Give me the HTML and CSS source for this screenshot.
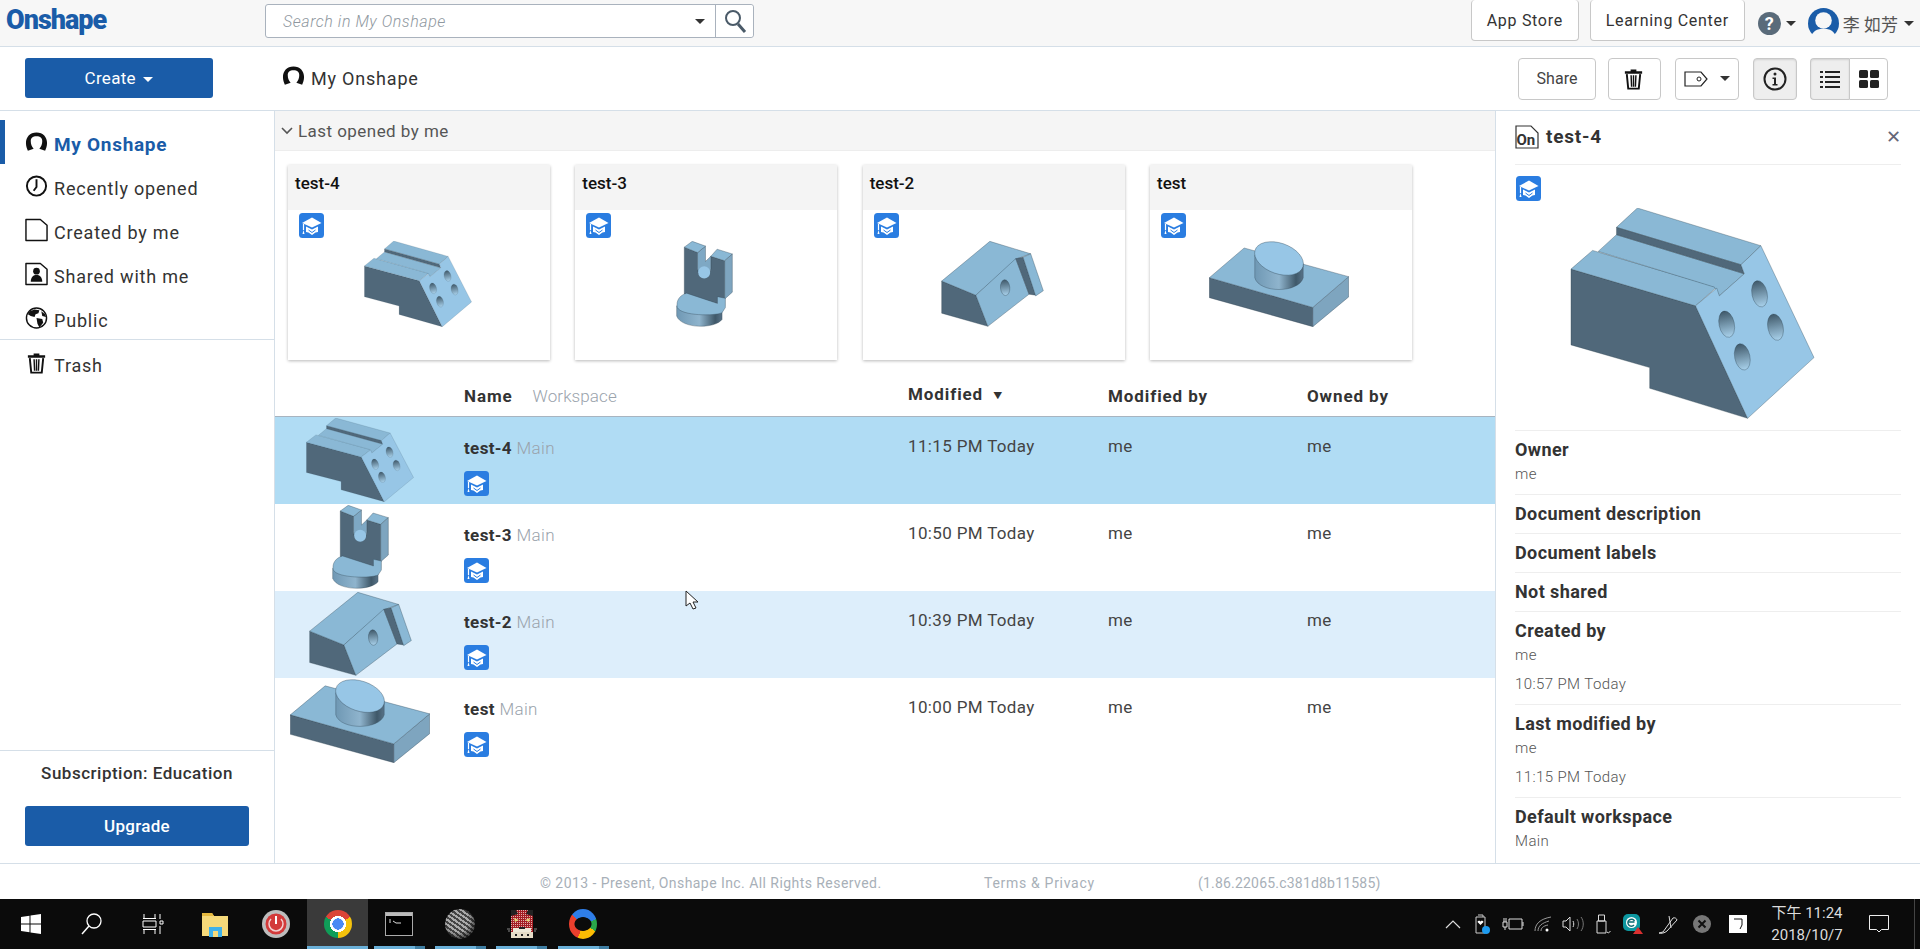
FILE: index.html
```html
<!DOCTYPE html>
<html lang="en">

<head>
    <meta charset="UTF-8">
    <title>My Onshape</title>
    <link rel="stylesheet" href="styles.css">
</head>

<body>
    <svg class="sprites" width="0" height="0" aria-hidden="true">
        <defs>
            <linearGradient id="hole" x1="0" y1="0" x2="0" y2="1">
                <stop offset="0" stop-color="#3f5869"/>
                <stop offset="1" stop-color="#a9d2ec"/>
            </linearGradient>
            <linearGradient id="cyl" x1="0" y1="0" x2="1" y2="0">
                <stop offset="0" stop-color="#6f98b4"/>
                <stop offset="0.5" stop-color="#8fb4cd"/>
                <stop offset="0.85" stop-color="#3f5869"/>
                <stop offset="1" stop-color="#587388"/>
            </linearGradient>
            <pattern id="check" width="2" height="2" patternUnits="userSpaceOnUse">
                <rect width="2" height="2" fill="#a41f24"/>
                <rect width="1" height="1" fill="#e0b0b0"/>
            </pattern>

            <symbol id="i-person" viewBox="0 0 24 24">
                <path d="M12 2C5 2 1 7 1 13c0 3 1 6 2 8l6-2c-2-2-3-5-3-8 0-3 2-5 6-5s6 2 6 5c0 3-1 6-3 8l6 2c1-2 2-5 2-8 0-6-4-11-11-11z" fill="currentColor"/>
            </symbol>
            <symbol id="i-clock" viewBox="0 0 24 24">
                <circle cx="12" cy="12" r="10" fill="none" stroke="currentColor" stroke-width="2"/>
                <path d="M12 5v8l-3 4" fill="none" stroke="currentColor" stroke-width="2"/>
            </symbol>
            <symbol id="i-doc" viewBox="0 0 24 24">
                <path d="M1 1h15l7 6v16H1z" fill="none" stroke="currentColor" stroke-width="1.5" stroke-linejoin="round"/>
            </symbol>
            <symbol id="i-shared" viewBox="0 0 24 24">
                <path d="M1 1h15l7 6v16H1z" fill="none" stroke="currentColor" stroke-width="1.5" stroke-linejoin="round"/>
                <circle cx="12" cy="9" r="3.5" fill="currentColor"/>
                <path d="M6 20c0-5 3-7 6-7s6 2 6 7z" fill="currentColor"/>
            </symbol>
            <symbol id="i-globe" viewBox="0 0 24 24">
                <circle cx="12" cy="12" r="10.5" fill="none" stroke="currentColor" stroke-width="1.5"/>
                <path d="M5 5l5-2 5 1-1 3-3 1-1 3-4-1-3-2zM12 12l6 1 1 4-4 5-2-4zM17 5l4 3 1 3-4-1z" fill="currentColor"/>
            </symbol>
            <symbol id="i-trash" viewBox="0 0 24 24">
                <path d="M3 4h18v2.500H3zM9 2h6v2H9z" fill="currentColor"/>
                <path d="M5 7l1.500 15h11L19 7" fill="none" stroke="currentColor" stroke-width="2"/>
                <path d="M9.500 8l.5 12M12 8v12M14.500 8l-.5 12" stroke="currentColor" stroke-width="1.500"/>
            </symbol>
            <symbol id="i-badge" viewBox="0 0 25 25">
                <rect width="25" height="25" rx="3.500" fill="#2a7de1"/>
                <path d="M3 10L13 4.500l9.500 5.500-9.500 4.500z" fill="#fff"/>
                <path d="M7 13.500l6 3 6-3v5.500l-2.500.5-3.500 2.500-3.500-2.500-2.500-.5z" fill="#fff"/>
                <path d="M9.500 17l3.500 2.500 3.500-2.500" fill="none" stroke="#2a7de1"/>
                <path d="M4.500 11v6" stroke="#fff" stroke-width="1.200"/>
                <path d="M3.500 21l1-4 1 4z" fill="#fff"/>
            </symbol>

            <!-- parts, traced in 3x reference coordinates -->
            <g id="part-bracket" stroke="#2e4250" stroke-width="1">
                <path d="M393 808L768 918 925 1255 630 1165V1103L393 1035z" fill="#50687a"/>
                <path d="M393 808L458 752 832 862 768 918z" fill="#8ab8d5"/>
                <path d="M475 755L530 705 915 822 840 888 825 862z" fill="#8ab8d5"/>
                <path d="M530 683L593 625 965 738 905 795z" fill="#8ab8d5"/>
                <path d="M530 683L905 795 915 822 530 705z" fill="#50687a"/>
                <path d="M768 918L832 865 840 888 915 822 905 795 965 738 1125 1073 925 1255z" fill="#97c6e6"/>
                <ellipse cx="961" cy="882" rx="23" ry="40" transform="rotate(-12 961 882)" fill="url(#hole)"/>
                <ellipse cx="862" cy="973" rx="23" ry="40" transform="rotate(-12 862 973)" fill="url(#hole)"/>
                <ellipse cx="1009" cy="982" rx="23" ry="40" transform="rotate(-12 1009 982)" fill="url(#hole)"/>
                <ellipse cx="909" cy="1071" rx="23" ry="40" transform="rotate(-12 909 1071)" fill="url(#hole)"/>
            </g>
            <g id="part-fork" stroke="#2e4250" stroke-width="1">
                <path d="M208 428L248 444V490C252 525 285 525 288 490V455L330 468V600L208 565z" fill="#50687a"/>
                <path d="M248 444L272 425V470L288 455V490C285 525 252 525 248 490z" fill="#7ea8c4"/>
                <circle cx="268" cy="502" r="18" fill="#97c6e6" stroke="none"/>
                <path d="M208 428L232 411 272 425 248 444z" fill="#8ab8d5"/>
                <path d="M288 455L307 434 353 448 330 468z" fill="#8ab8d5"/>
                <path d="M330 468L353 448V560L330 580z" fill="#7ea5bf"/>
                <path d="M185 600V630C200 668 300 668 322 640V610z" fill="url(#cyl)"/>
                <path d="M215 563L308 593V573L332 578V605L322 620C300 630 200 630 187 605 182 585 195 568 215 563z" fill="#8ab8d5"/>
            </g>
            <g id="part-block" stroke="#2e4250" stroke-width="1">
                <path d="M117 787L220 828 256 918 117 880z" fill="#50687a"/>
                <path d="M117 787L262 672 385 708 345 722 220 828z" fill="#8ab8d5"/>
                <path d="M220 828L340 722 380 825 256 918z" fill="#8ab8d5"/>
                <path d="M340 722L362 718 400 828 380 825z" fill="#50687a"/>
                <path d="M362 718L385 708 423 815 400 830z" fill="#8ab8d5"/>
                <ellipse cx="308" cy="806" rx="14" ry="23" transform="rotate(-5 308 806)" fill="url(#hole)"/>
            </g>
            <g id="part-plate" stroke="#2e4250" stroke-width="1">
                <path d="M60 1040L372 1125V1180L60 1097z" fill="#50687a"/>
                <path d="M372 1125L480 1037V1095L372 1180z" fill="#7ea5bf"/>
                <path d="M60 1040L165 955 480 1037 372 1125z" fill="#8ab8d5"/>
                <path d="M197 975V1040C210 1085 330 1085 343 1040V1000z" fill="url(#cyl)"/>
                <ellipse cx="270" cy="985" rx="76" ry="44" transform="rotate(18 270 985)" fill="#97c6e6"/>
            </g>
        </defs>
    </svg>

    <header class="topbar">
        <a class="logo">Onshape</a>
        <div class="search">
            <span class="search-text">Search in My Onshape</span>
            <span class="caret search-caret"></span>
            <button class="search-btn">
                <svg viewBox="0 0 24 24" width="24" height="24"><circle cx="10" cy="9" r="7" fill="none" stroke="#4a5a68" stroke-width="2"/><path d="M15 15l7 8" stroke="#4a5a68" stroke-width="3"/></svg>
            </button>
        </div>
        <div class="top-right">
            <a class="btn top-btn app-btn">App Store</a>
            <a class="btn top-btn">Learning Center</a>
            <span class="help">?</span>
            <span class="caret"></span>
            <svg class="avatar" viewBox="0 0 30 30"><circle cx="15" cy="15" r="15" fill="#1a5ca8"/><circle cx="15" cy="12" r="8" fill="#f7f7f7"/><path d="M2 30c2-8 7-10 13-10s11 2 13 10z" fill="#f7f7f7"/></svg>
            <span class="user">李 如芳</span>
            <span class="caret"></span>
        </div>
    </header>

    <div class="toolbar">
        <button class="create">Create <span class="caret caret-white"></span></button>
        <div class="crumb">
            <svg class="ic ic-crumb"><use href="#i-person"/></svg>
            <span>My Onshape</span>
        </div>
        <div class="tools">
            <button class="btn tool share">Share</button>
            <button class="btn tool trash"><svg class="ic"><use href="#i-trash"/></svg></button>
            <button class="btn tool tag">
                <svg viewBox="0 0 24 16" width="24" height="16"><path d="M1 1h16l6 7-6 7H1z" fill="none" stroke="#222" stroke-width="1.200"/><circle cx="15" cy="8" r="2" fill="none" stroke="#222"/></svg>
                <span class="caret"></span>
            </button>
            <button class="btn tool info on">
                <svg viewBox="0 0 24 24" width="24" height="24"><circle cx="12" cy="12" r="10.500" fill="none" stroke="#222" stroke-width="2"/><circle cx="12" cy="7" r="1.500" fill="#222"/><path d="M9.500 10.500H13V17h1.500v1.500h-5V17H11v-5H9.500z" fill="#222"/></svg>
            </button>
            <div class="toggle">
                <button class="btn tool view on">
                    <svg viewBox="0 0 20 18" width="20" height="18"><path d="M0 2h3M5 2h15M0 7h3M5 7h15M0 12h3M5 12h15M0 17h3M5 17h15" stroke="#222" stroke-width="2"/></svg>
                </button>
                <button class="btn tool view">
                    <svg viewBox="0 0 20 18" width="20" height="18"><rect width="9" height="8" rx="1.500" fill="#222"/><rect x="11" width="9" height="8" rx="1.500" fill="#222"/><rect y="10" width="9" height="8" rx="1.500" fill="#222"/><rect x="11" y="10" width="9" height="8" rx="1.500" fill="#222"/></svg>
                </button>
            </div>
        </div>
    </div>

    <div class="app">
        <nav class="sidebar">
            <a class="nav-item selected-nav"><svg class="ic"><use href="#i-person"/></svg>My Onshape</a>
            <a class="nav-item"><svg class="ic"><use href="#i-clock"/></svg>Recently opened</a>
            <a class="nav-item"><svg class="ic"><use href="#i-doc"/></svg>Created by me</a>
            <a class="nav-item"><svg class="ic"><use href="#i-shared"/></svg>Shared with me</a>
            <a class="nav-item"><svg class="ic"><use href="#i-globe"/></svg>Public</a>
            <a class="nav-item nav-trash"><svg class="ic"><use href="#i-trash"/></svg>Trash</a>
            <div class="sub">
                <p>Subscription: Education</p>
                <button class="upgrade">Upgrade</button>
            </div>
        </nav>

        <main class="content">
            <div class="recent-head">
                <svg viewBox="0 0 12 8" width="12" height="8"><path d="M1 1l5 5 5-5" fill="none" stroke="#555" stroke-width="1.600"/></svg>
                <span>Last opened by me</span>
            </div>
            <div class="cards">
                <article class="card">
                    <h3>test-4</h3>
                    <svg class="badge"><use href="#i-badge"/></svg>
                    <svg class="part part-a" viewBox="390 625 738 632" preserveAspectRatio="none"><use href="#part-bracket"/></svg>
                </article>
                <article class="card">
                    <h3>test-3</h3>
                    <svg class="badge"><use href="#i-badge"/></svg>
                    <svg class="part part-b" viewBox="183 410 172 252" preserveAspectRatio="none"><use href="#part-fork"/></svg>
                </article>
                <article class="card">
                    <h3>test-2</h3>
                    <svg class="badge"><use href="#i-badge"/></svg>
                    <svg class="part part-c" viewBox="115 671 310 249" preserveAspectRatio="none"><use href="#part-block"/></svg>
                </article>
                <article class="card">
                    <h3>test</h3>
                    <svg class="badge"><use href="#i-badge"/></svg>
                    <svg class="part part-d" viewBox="59 935 422 246" preserveAspectRatio="none"><use href="#part-plate"/></svg>
                </article>
            </div>

            <div class="list-head grid">
                <span></span>
                <span class="name-head"><b>Name</b><em>Workspace</em></span>
                <b>Modified <i class="sort">▼</i></b>
                <b>Modified by</b>
                <b>Owned by</b>
            </div>
            <div class="row grid selected">
                <svg class="part part-a" viewBox="390 625 738 632" preserveAspectRatio="none"><use href="#part-bracket"/></svg>
                <div class="doc"><p><b>test-4</b> <em>Main</em></p><svg class="badge-row"><use href="#i-badge"/></svg></div>
                <span>11:15 PM Today</span><span>me</span><span>me</span>
            </div>
            <div class="row grid">
                <svg class="part part-b" viewBox="183 410 172 252" preserveAspectRatio="none"><use href="#part-fork"/></svg>
                <div class="doc"><p><b>test-3</b> <em>Main</em></p><svg class="badge-row"><use href="#i-badge"/></svg></div>
                <span>10:50 PM Today</span><span>me</span><span>me</span>
            </div>
            <div class="row grid hovered">
                <svg class="part part-c" viewBox="115 671 310 249" preserveAspectRatio="none"><use href="#part-block"/></svg>
                <div class="doc"><p><b>test-2</b> <em>Main</em></p><svg class="badge-row"><use href="#i-badge"/></svg></div>
                <span>10:39 PM Today</span><span>me</span><span>me</span>
                <svg class="cursor" viewBox="0 0 13 20" width="13" height="20"><path d="M1 1v15l4-3 3 6 3-1-3-6h5z" fill="#fff" stroke="#222"/></svg>
            </div>
            <div class="row grid">
                <svg class="part part-d" viewBox="59 935 422 246" preserveAspectRatio="none"><use href="#part-plate"/></svg>
                <div class="doc"><p><b>test</b> <em>Main</em></p><svg class="badge-row"><use href="#i-badge"/></svg></div>
                <span>10:00 PM Today</span><span>me</span><span>me</span>
            </div>
        </main>

        <aside class="panel">
            <div class="panel-head">
                <svg class="doc-on" viewBox="0 0 24 24" width="24" height="24"><path d="M1 1h15l7 7v15H1z" fill="none" stroke="#333" stroke-width="1.200"/><text x="1.500" y="20" class="doc-on-text">On</text></svg>
                <h2>test-4</h2>
                <span class="close">✕</span>
            </div>
            <svg class="badge panel-badge"><use href="#i-badge"/></svg>
            <svg class="part-big" viewBox="390 625 738 632" preserveAspectRatio="none"><use href="#part-bracket"/></svg>
            <div class="prop has-value"><h4>Owner</h4><p>me</p></div>
            <div class="prop"><h4>Document description</h4></div>
            <div class="prop"><h4>Document labels</h4></div>
            <div class="prop"><h4>Not shared</h4></div>
            <div class="prop has-value"><h4>Created by</h4><p>me</p><p class="when">10:57 PM Today</p></div>
            <div class="prop has-value"><h4>Last modified by</h4><p>me</p><p class="when">11:15 PM Today</p></div>
            <div class="prop has-value"><h4>Default workspace</h4><p>Main</p></div>
        </aside>
    </div>

    <footer class="footer">
        <span>© 2013 - Present, Onshape Inc. All Rights Reserved.</span>
        <span class="terms">Terms &amp; Privacy</span>
        <span class="version">(1.86.22065.c381d8b11585)</span>
    </footer>

    <div class="taskbar">
        <span class="tile">
            <svg viewBox="0 0 20 20" width="20" height="20"><path d="M0 3l8.500-1.300V9.500H0zM9.500 1.500L20 0v9.500H9.500zM0 10.500h8.500v7.800L0 17zM9.500 10.500H20V20L9.500 18.500z" fill="#fff"/></svg>
        </span>
        <span class="tile">
            <svg viewBox="0 0 22 22" width="22" height="22"><circle cx="13" cy="8" r="7" fill="none" stroke="#fff" stroke-width="1.300"/><path d="M8 13l-7 8" stroke="#fff" stroke-width="1.500"/></svg>
        </span>
        <span class="tile">
            <svg viewBox="0 0 22 20" width="22" height="20"><path d="M1 4.500h13M1 15.500h13M1 7h13v6H1zM2 0v4M13 0v4M2 16v4M13 16v4" fill="none" stroke="#fff"/><path d="M18 0v5M18 7h3v3h-3zM18 12v8" stroke="#fff" fill="none"/></svg>
        </span>
        <span class="tile">
            <svg viewBox="0 0 28 28" width="28" height="28"><path d="M1 3h10l2 3h14v20H1z" fill="#f5d97a"/><path d="M1 3h10l2 3H1z" fill="#e5b93f"/><rect x="8" y="17" width="13" height="10" fill="#3fb1ea"/><rect x="12" y="21" width="5" height="6" fill="#f5d97a"/></svg>
        </span>
        <span class="tile">
            <svg viewBox="0 0 28 28" width="28" height="28"><circle cx="14" cy="14" r="14" fill="#bdbdbd"/><circle cx="14" cy="14" r="10.500" fill="#d33a3a"/><path d="M9 9a7 7 0 1 0 10 0" fill="none" stroke="#f3d0d0" stroke-width="1.500"/><path d="M14 6v8" stroke="#fff" stroke-width="2"/></svg>
        </span>
        <span class="tile current"><span class="chrome"></span></span>
        <span class="tile open">
            <svg viewBox="0 0 28 24" width="28" height="24"><rect x=".5" y=".5" width="27" height="23" fill="#000" stroke="#aaa"/><rect x="1" y="1" width="26" height="3" fill="#bbb"/><path d="M4 8h2M4 10h2M8 9l3 2h5" stroke="#ddd" fill="none"/></svg>
        </span>
        <span class="tile open"><span class="ball"></span></span>
        <span class="tile open">
            <svg viewBox="0 0 30 28" width="30" height="28"><rect x="4" width="22" height="28" fill="url(#check)"/><path d="M4 0h5l2 4-7 2zM26 0h-5l-2 4 7 2z" fill="#222"/><path d="M7 8l5 2-4 2zM23 8l-5 2 4 2z" fill="#e8d67a"/><path d="M6 18h18v4H6z" fill="#eee8d8"/><path d="M4 22h22v6H4z" fill="#e6dcc8"/><path d="M12 17h6v2h-6zM8 24h2v2H8zM14 24h2v2h-2zM20 24h2v2h-2z" fill="#222"/><path d="M0 19h3M1 21h2M27 19h3M27 21h2" stroke="#888"/></svg>
        </span>
        <span class="tile open"><span class="swirl"></span></span>

        <div class="tray">
            <span class="tray-item">
                <svg viewBox="0 0 18 18" width="18" height="18"><path d="M2 13L9 6l7 7" fill="none" stroke="#ddd" stroke-width="1.200"/></svg>
            </span>
            <span class="tray-item">
                <svg viewBox="0 0 16 20" width="16" height="20"><path d="M1 3h9v16H1zM3 1h5v2" fill="none" stroke="#ccc"/><path d="M5.500 11L2.500 8c1-2 3-1 3 0 0-1 2-2 3 0z" fill="#fff"/><circle cx="11" cy="16" r="4" fill="#1e9cf0"/></svg>
            </span>
            <span class="tray-item">
                <svg viewBox="0 0 22 14" width="22" height="14"><path d="M7 2h13v10H7z" fill="none" stroke="#ddd"/><path d="M21 5v4" stroke="#ddd"/><path d="M1 5h4v5H1zM2 1v4M4 1v4M3 10v3" stroke="#ddd" fill="none"/></svg>
            </span>
            <span class="tray-item">
                <svg viewBox="0 0 18 16" width="18" height="16"><path d="M1 15C1 8 6 3 17 1M4 15c0-5 4-8 11-10M7 15c0-3 2-5 7-6" fill="none" stroke="#999"/><circle cx="13" cy="14" r="1.500" fill="#fff"/></svg>
            </span>
            <span class="tray-item">
                <svg viewBox="0 0 22 16" width="22" height="16"><path d="M1 5h3l4-4v14l-4-4H1z" fill="none" stroke="#ddd"/><path d="M11 5c1 2 1 4 0 6" fill="none" stroke="#ddd"/><path d="M15 3c2 3 2 7 0 10M19 1c3 4 3 10 0 14" fill="none" stroke="#777"/></svg>
            </span>
            <span class="tray-item">
                <svg viewBox="0 0 16 20" width="16" height="20"><path d="M2 7h9v12H2zM3.500 1h6v6h-6zM12 18l1.500 1 2-2" fill="none" stroke="#ddd"/></svg>
            </span>
            <span class="tray-item">
                <svg viewBox="0 0 20 20" width="20" height="20"><rect width="17" height="17" rx="5" fill="#0d97a0"/><circle cx="8.500" cy="8.500" r="5.500" fill="#fff"/><path d="M5.500 8h6M11 11a3.500 3.500 0 1 1 .5-4" fill="none" stroke="#0d6c74" stroke-width="1.500"/><path d="M15 13l5 7H10z" fill="#d93030"/></svg>
            </span>
            <span class="tray-item tray-pen">
                <svg viewBox="0 0 20 20" width="20" height="20"><path d="M1 19l4-1L15 4a3 3 0 0 1 4 2L9 17c-2 2-7 3-8 2zM11 2l2 12" fill="none" stroke="#ddd"/></svg>
            </span>
            <span class="tray-item tray-x">
                <svg viewBox="0 0 18 18" width="18" height="18"><circle cx="9" cy="9" r="9" fill="#777"/><path d="M5.500 5.500l7 7M12.500 5.500l-7 7" stroke="#111" stroke-width="2"/></svg>
            </span>
            <span class="tray-item tray-box">
                <svg viewBox="0 0 18 18" width="18" height="18"><rect width="18" height="18" fill="#fff"/><path d="M5 4h8v6l-2 4" fill="none" stroke="#111"/></svg>
            </span>
            <span class="clock">下午 11:24<br>2018/10/7</span>
            <span class="notify">
                <svg viewBox="0 0 20 20" width="20" height="20"><path d="M.5 1.500h19v14h-7l-2.500 2.500-2.500-2.500h-7z" fill="none" stroke="#eee"/></svg>
            </span>
            <span class="show-desktop"></span>
        </div>
    </div>
</body>

</html>
```

FILE: styles.css
```css
:root {
    --blue: #1a5ca8;
    --line: #d5dfe8;
    --text: #333;
    --muted: #a8b0b8;
}

* {
    box-sizing: border-box;
}

html,
body {
    height: 100%;
}

body {
    margin: 0;
    display: flex;
    flex-direction: column;
    height: 949px;
    overflow: hidden;
    font-family: Roboto, "Noto Sans CJK TC", sans-serif;
    font-size: 17px;
    color: var(--text);
    background: #fff;
}

p,
h2,
h3,
h4 {
    margin: 0;
}

button {
    font: inherit;
    cursor: pointer;
}

.sprites {
    position: absolute;
}

.ic {
    width: 23px;
    height: 24px;
    flex: none;
    color: #111;
}

.caret {
    display: inline-block;
    width: 0;
    height: 0;
    border-left: 5px solid transparent;
    border-right: 5px solid transparent;
    border-top: 5px solid #333;
}

.caret-white {
    margin-left: 3px;
    border-top-color: #fff;
    vertical-align: 2px;
}

.btn {
    display: flex;
    align-items: center;
    justify-content: center;
    background: #fff;
    border: 1px solid #c8c8c8;
    border-radius: 4px;
    color: #444;
}

/* top bar */
.topbar {
    flex: none;
    display: flex;
    height: 47px;
    background: #f7f7f7;
    border-bottom: 1px solid var(--line);
}

.logo {
    width: 265px;
    padding-left: 6px;
    font-weight: 900;
    font-size: 27px;
    line-height: 41px;
    color: var(--blue);
    letter-spacing: -1px;
}

.search {
    display: flex;
    align-items: center;
    width: 489px;
    height: 34px;
    margin-top: 4px;
    background: #fff;
    border: 1px solid #a9b2bd;
    border-radius: 3px;
}

.search-text {
    flex: 1;
    padding-left: 17px;
    font-style: italic;
    font-weight: 300;
    font-size: 16px;
    letter-spacing: 0.55px;
    color: #8f98a0;
}

.search-caret {
    margin-right: 10px;
}

.search-btn {
    display: flex;
    align-items: center;
    justify-content: center;
    width: 38px;
    height: 32px;
    padding: 0;
    background: #fff;
    border: 0;
    border-left: 1px solid #a9b2bd;
    border-radius: 0 3px 3px 0;
}

.top-right {
    display: flex;
    align-items: center;
    height: 46px;
    margin-left: auto;
    padding-right: 6px;
}

.top-btn {
    align-self: flex-start;
    height: 41px;
    width: 155px;
    margin-left: 11px;
    color: #333;
    font-size: 16px;
    letter-spacing: 0.7px;
    border-top: 0;
}

.app-btn {
    width: 108px;
}

.help {
    width: 23px;
    height: 23px;
    margin: 0 5px 0 13px;
    border-radius: 50%;
    background: #5a6b7a;
    color: #fff;
    font-weight: 700;
    font-size: 18px;
    line-height: 23px;
    text-align: center;
}

.avatar {
    width: 31px;
    height: 31px;
    margin-left: 12px;
}

.user {
    margin: 0 6px 0 4px;
    font-size: 17px;
    color: #555;
}

/* toolbar */
.toolbar {
    flex: none;
    display: flex;
    align-items: center;
    height: 64px;
    border-bottom: 1px solid var(--line);
    padding: 0 32px 0 25px;
}

.create {
    width: 188px;
    height: 40px;
    margin-bottom: 2px;
    border: 0;
    border-radius: 3px;
    background: var(--blue);
    color: #fff;
    font-size: 17px;
    letter-spacing: 0.3px;
}

.crumb {
    display: flex;
    align-items: center;
    gap: 6px;
    margin-left: 69px;
    font-size: 18px;
    letter-spacing: 0.8px;
}

.ic-crumb {
    margin-top: -6px;
}

.tools {
    display: flex;
    margin-left: auto;
}

.tool {
    height: 42px;
    padding: 0;
}

.share {
    width: 78px;
    font-size: 16px;
}

.trash {
    width: 53px;
    margin-left: 12px;
}

.trash .ic {
    margin-right: 3px;
}

.tag {
    width: 64px;
    margin-left: 14px;
    gap: 12px;
}

.info {
    width: 44px;
    margin-left: 14px;
}

.toggle {
    display: flex;
    margin-left: 13px;
}

.view {
    width: 39px;
}

.view:first-child {
    border-radius: 4px 0 0 4px;
    border-right: 0;
}

.view:last-child {
    border-radius: 0 4px 4px 0;
}

.on {
    background: #eee;
    box-shadow: inset 0 1px 2px rgba(0, 0, 0, 0.12);
}

/* main columns */
.app {
    flex: 1;
    display: flex;
    min-height: 0;
}

.sidebar {
    flex: none;
    display: flex;
    flex-direction: column;
    width: 275px;
    padding-top: 9px;
    border-right: 1px solid var(--line);
}

.nav-item {
    display: flex;
    align-items: center;
    gap: 6px;
    height: 44px;
    padding: 4px 0 0 25px;
    font-size: 18px;
    letter-spacing: 0.8px;
    color: #333;
}

.nav-item .ic {
    margin-top: -4px;
}

.selected-nav {
    color: var(--blue);
    font-weight: 700;
    font-size: 19px;
    letter-spacing: 0.7px;
    box-shadow: inset 5px 0 var(--blue);
}

.nav-trash {
    margin-top: -1px;
    border-top: 1px solid var(--line);
    height: 47px;
}

.sub {
    margin-top: auto;
    height: 113px;
    padding-top: 11px;
    border-top: 1px solid var(--line);
    text-align: center;
}

.sub p {
    font-weight: 500;
    font-size: 17px;
    letter-spacing: 0.5px;
    line-height: 22px;
    color: #333;
}

.upgrade {
    width: 224px;
    height: 40px;
    margin-top: 22px;
    border: 0;
    border-radius: 3px;
    background: var(--blue);
    color: #fff;
    font-weight: 500;
    font-size: 17px;
    letter-spacing: 0.3px;
}

.content {
    flex: 1;
    min-width: 0;
    position: relative;
}

.recent-head {
    display: flex;
    align-items: center;
    gap: 5px;
    height: 40px;
    padding: 1px 0 0 6px;
    background: #f5f5f5;
    border-bottom: 1px solid #ededed;
    font-size: 17px;
    letter-spacing: 0.45px;
    color: #555;
}

.cards {
    display: flex;
    gap: 25.33px;
    padding: 14px 0 0 13px;
}

.card {
    display: flex;
    flex-direction: column;
    width: 262px;
    height: 195px;
    background: #fff;
    box-shadow: 0 1px 3px rgba(0, 0, 0, 0.28);
}

.card h3 {
    height: 45px;
    padding-left: 7px;
    background: #f4f4f4;
    font-weight: 500;
    font-size: 17px;
    line-height: 37px;
    color: #111;
}

.badge {
    flex: none;
    width: 25px;
    height: 25px;
    margin: 3px 0 0 11px;
}

.part {
    flex: none;
    display: block;
    height: 84px;
}

.card .part {
    height: 86px;
    margin: 3px 3px 0 0;
    align-self: center;
}

.part-a {
    width: 108px;
}

.part-b {
    width: 57px;
}

.part-c {
    width: 103px;
}

.part-d {
    width: 140px;
}

.grid {
    display: grid;
    grid-template-columns: 189px 444px 200px 199px 1fr;
}

.list-head {
    height: 57px;
    align-items: end;
    padding-bottom: 10px;
    border-bottom: 1px solid #a8b4c0;
    line-height: 20px;
    font-size: 17px;
    letter-spacing: 0.9px;
}

.name-head b {
    margin-right: 20px;
}

.name-head em {
    letter-spacing: 0.1px;
}

em {
    font-style: normal;
    font-weight: 300;
    color: #9aa3ac;
}

.sort {
    font-style: normal;
    font-size: 9px;
    margin-left: 5px;
    vertical-align: 1px;
}

.row {
    position: relative;
    height: 87px;
    line-height: 20px;
    font-size: 17px;
    letter-spacing: 0.35px;
    color: #444;
    font-weight: 400;
}

.row > span {
    padding-top: 19px;
}

.row .part {
    justify-self: center;
    margin-left: -19px;
    margin-top: 1px;
}

.selected {
    background: #b0dcf4;
}

.hovered {
    background: #ddeefb;
}

.doc {
    padding-top: 21px;
}

.doc b {
    font-weight: 700;
    color: #333;
}

.badge-row {
    display: block;
    width: 25px;
    height: 25px;
    margin-top: 13px;
}

.cursor {
    position: absolute;
    left: 410px;
    top: -1px;
}

/* info panel */
.panel {
    flex: none;
    width: 425px;
    padding: 0 19px;
    border-left: 1px solid var(--line);
    overflow: hidden;
}

.panel-head {
    display: flex;
    align-items: center;
    gap: 7px;
    height: 54px;
    padding-bottom: 2px;
    border-bottom: 1px solid #eee;
}

.panel-head h2 {
    flex: 1;
    font-weight: 700;
    font-size: 19px;
    letter-spacing: 0.8px;
}

.doc-on-text {
    font-weight: 700;
    font-size: 15px;
    fill: #333;
}

.close {
    font-size: 18px;
    color: #667;
}

.panel-badge {
    display: block;
    margin: 11px 0 0 1px;
}

.part-big {
    display: block;
    width: 245px;
    height: 211px;
    margin: 7px 0 11px 55px;
}

.prop {
    padding: 9px 0;
    border-top: 1px solid #eee;
}

.has-value {
    padding-bottom: 10px;
}

.prop h4 {
    font-weight: 700;
    font-size: 18px;
    letter-spacing: 0.4px;
    line-height: 20px;
    color: #333;
}

.prop p {
    margin-top: 4px;
    font-weight: 300;
    font-size: 15px;
    letter-spacing: 0.4px;
    line-height: 20px;
    color: #555;
}

.prop .when {
    margin-top: 9px;
}

/* footer */
.footer {
    flex: none;
    display: grid;
    grid-template-columns: 444px 214px auto;
    align-items: center;
    height: 36px;
    padding: 2px 0 0 540px;
    border-top: 1px solid var(--line);
    font-size: 14px;
    letter-spacing: 0.44px;
    color: var(--muted);
}

.terms {
    letter-spacing: 0.7px;
}

.version {
    letter-spacing: 0.2px;
}

/* windows taskbar */
.taskbar {
    flex: none;
    display: flex;
    height: 50px;
    background: #0b0b0b;
    color: #eee;
}

.tile {
    display: flex;
    align-items: center;
    justify-content: center;
    width: 61.4px;
}

.open {
    background: linear-gradient(to right, #6ab0d8 80%, #3f7ea3 80%) center bottom / 51px 3px no-repeat;
}

.current {
    background: linear-gradient(#6ab0d8, #6ab0d8) bottom / 100% 3px no-repeat, #3a3a3a;
}

.chrome {
    width: 28px;
    height: 28px;
    border-radius: 50%;
    background: radial-gradient(circle, #4a8af4 0 28%, #fff 29% 40%, transparent 41%), conic-gradient(#db4437 0 60deg, #f4c20d 60deg 180deg, #0f9d58 180deg 300deg, #db4437 300deg);
}

.ball {
    width: 30px;
    height: 30px;
    border-radius: 50%;
    background: radial-gradient(circle at 42% 40%, transparent 45%, rgba(0, 0, 0, 0.65) 75%), repeating-linear-gradient(35deg, #aaa 0 2px, #444 2px 4px);
}

.swirl {
    width: 28px;
    height: 30px;
    border-radius: 50%;
    background: radial-gradient(ellipse 32% 24%, #0b0b0b 0 90%, transparent 100%), conic-gradient(from -50deg, #2f7ee8 0 120deg, #2aa84a 120deg 170deg, #fbbc04 170deg 250deg, #ea3f2d 250deg 360deg);
}

.tray {
    display: flex;
    align-items: center;
    margin-left: auto;
}

.tray-item {
    display: flex;
    align-items: center;
    justify-content: center;
    width: 30px;
}

.tray-pen {
    width: 40px;
}

.tray-x {
    width: 28px;
}

.tray-box {
    width: 44px;
}

.clock {
    width: 94px;
    font-size: 15px;
    line-height: 22px;
    text-align: center;
    color: #ddd;
}

.notify {
    display: flex;
    justify-content: center;
    width: 50px;
}

.show-desktop {
    width: 6px;
    height: 50px;
    margin-left: 10px;
    border-left: 1px solid #444;
}
```
